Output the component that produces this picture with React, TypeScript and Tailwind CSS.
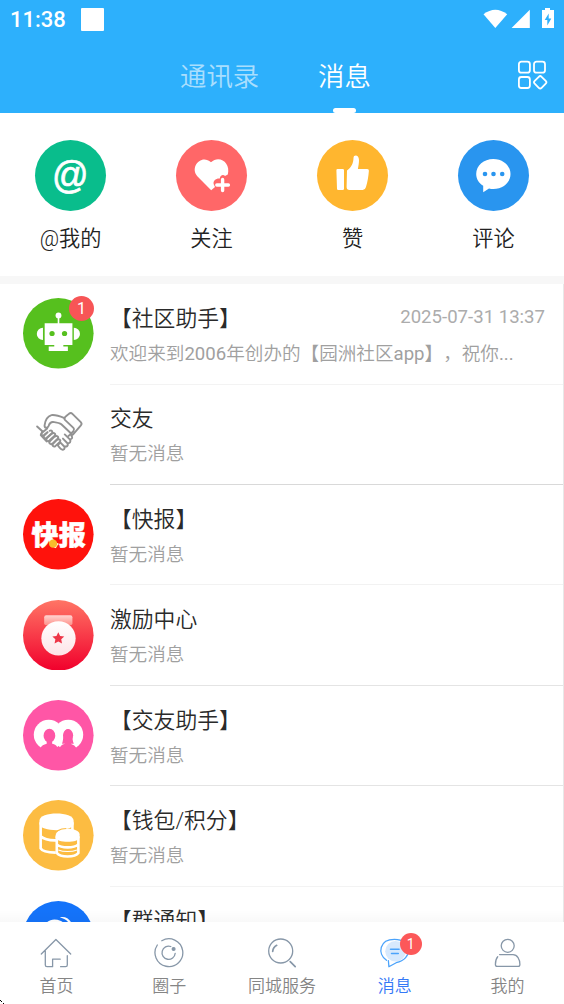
import React from 'react';

const Robot = () => (
  <svg viewBox="0 0 70 70" className="size-full">
    <circle cx="35" cy="35" r="35" fill="#56c01e" />
    <g fill="#fff">
      <circle cx="35.2" cy="17.3" r="2.9" />
      <path d="M34.4 19h1.6v6h-1.6zM21.5 25H49v21.7h-9V48h4.5v4.6h-19V48H31v-1.3h-9.5z" />
      <path d="M19.8 29.5v12.2a6.1 6.1 0 0 1 0-12.2zM50.4 29.5v12.2a6.1 6.1 0 0 0 0-12.2z" />
    </g>
    <circle cx="28.8" cy="35.2" r="2.6" fill="#56c01e" />
    <circle cx="41.2" cy="35.2" r="2.6" fill="#56c01e" />
  </svg>
);

const Handshake = () => (
  <svg viewBox="0 0 70 70" className="size-full" fill="none" stroke="#929292" strokeWidth="1.9" strokeLinecap="round" strokeLinejoin="round">
    <path d="M42.6 17.2l3.2-2.7q1.7-1.3 3.2.2l8.3 8.3q1.5 1.6.1 3.1l-7.7 9q-1.2 1.2-2.5-.2l2.9-3.4q1.2-1.5-.1-2.9l-8.4-7.9q-1.5-1.6 1-3.5z" />
    <path d="M41.2 19c-3.3-1.4-7.8-3.5-13-3-4 1.2-6.2 5-6.8 10.2-.1 2.8 2.7 3.2 3.9.7 1-2.3 1.2-4.4 4.5-4.1 3.3.4 6 .5 8.2 2.3l10 9.4-3 2.3" />
    <path d="M14 27.2l6 5.5M24 29.3l-4.8 3.8c-2.1 1.8-.4 4 1.6 2.6l3.4-2.8M24.4 33l-3.2 3c-1.8 2.1.4 4.1 2.3 2.4l5-4.2c1.7-1.8-.2-3.6-2-2.7" />
    <path d="M28.3 34.4l-4.5 4.3c-1.8 2.1.5 4 2.4 2.5l5.2-4.7c1.5-1.9-.7-3.6-2.4-2.3M31.3 37.2l-4.5 4.5c-1.7 2.1.5 4 2.4 2.5l5.1-4.8c1.6-1.9-.6-3.6-2.4-2.3M34.2 40l-4.2 4.1c-1.7 2.1.4 3.9 2.3 2.4l4.2-3.8c1.5-1.9-.5-3.5-2.2-2.3" />
    <path d="M36.5 43.5l-2.1 2.4c1.5 2.1 3.6 4.9 5.2 4.4 2.5-.5 1.7-2.6.8-3.7 3.1 1.6 5-.7 3.4-3 2.8.8 4.1-1.7 2.6-3.5 2.7-.5 3-2.2 1.5-3.8M40.4 46.6l-3.2-3.3M43.8 43.6l-4.2-4.3M46.4 40.1l-5-5M19 32.5l-1.4 3.4 5.8 6.2" />
  </svg>
);

const Express = () => (
  <svg viewBox="0 0 70 70" className="size-full">
    <circle cx="35" cy="35" r="35" fill="#ff120c" />
    <text x="35.4" y="46" textAnchor="middle" fill="#fff" stroke="#fff" strokeWidth="0.5" className="font-['Noto_Sans_CJK_SC',sans-serif] text-[27px] font-black">快报</text>
    <circle cx="29.8" cy="44.3" r="4.1" fill="#f8bc2b" />
  </svg>
);

const Medal = () => (
  <svg viewBox="0 0 70 70" className="size-full">
    <defs>
      <linearGradient id="medalBg" x2="0" y2="1">
        <stop stopColor="#ff7565" />
        <stop offset="1" stopColor="#f1002c" />
      </linearGradient>
      <linearGradient id="medalRibbon" x2="0" y2="1">
        <stop stopColor="#ffd5d2" />
        <stop offset="1" stopColor="#ff9089" />
      </linearGradient>
      <linearGradient id="medalDisc" x2="0" y2="1">
        <stop stopColor="#fff" />
        <stop offset="1" stopColor="#fde4e7" />
      </linearGradient>
    </defs>
    <circle cx="35" cy="35" r="35" fill="url(#medalBg)" />
    <path d="M23 15h24q2 0 2 2v6q0 2-2 2H23q-2 0-2-2v-6q0-2 2-2z" fill="url(#medalRibbon)" />
    <circle cx="35.2" cy="38" r="17" fill="url(#medalDisc)" />
    <path d="M35 32l1.8 3.7 4.1.5-3 2.8.8 4.1-3.7-2-3.7 2 .8-4.1-3-2.8 4.1-.5z" fill="#ee3547" />
  </svg>
);

const Friends = () => (
  <svg viewBox="0 0 70 70" className="size-full">
    <circle cx="35" cy="35" r="35" fill="#ff56a6" />
    <g fill="#fff">
      <circle cx="25.5" cy="34.5" r="14.8" />
      <circle cx="44.9" cy="34.5" r="14.8" />
    </g>
    <g fill="#ff56a6">
      <path d="M9 52V47.8h8.2q1.8-3.3 6.3-4.3V40h5.4v3.5q4.1.7 5.1 3.4l1.3.8 1.3-.8q1.2-2.7 5.4-3.6h-3.3c2.1-4.3.4-14.3 5.8-14.3s3.7 10 5.9 14.3h-3.2q4.3 1.2 6 4.5H61V52z" />
      <ellipse cx="26.2" cy="35.4" rx="5.8" ry="6.8" />
      <ellipse cx="44.7" cy="35" rx="5" ry="6.2" />
    </g>
  </svg>
);

const Wallet = () => (
  <svg viewBox="0 0 70 70" className="size-full">
    <circle cx="35" cy="35" r="35" fill="#fcbc42" />
    <g fill="none" stroke="#fff" strokeWidth="2.6">
      <path d="M17.5 22v26c1.5 3 8 4 15 4.2M49 22v8M17.5 36c4 3.7 9 4.2 15.7 4" />
      <path d="M33.5 36v16.5c3.5 4.7 18 4.7 21.4 0V36M33.5 44c4.5 4 17 4 21.4 0" />
      <path d="M35 49.5c5 2.2 13.5 2.2 18.5 0" strokeWidth="1" />
    </g>
    <path d="M16.3 20.5c0-9.5 33.9-9.5 33.9 0v3c0 8.5-33.9 8.5-33.9 0z" fill="#fff" />
    <path d="M32.3 34c0-7.4 23.8-7.4 23.8 0v3c0 6-23.8 6-23.8 0z" fill="#fff" />
    <path d="M32 34.5c0-3.3 4-6 11-6.2" fill="none" stroke="#fcbc42" strokeWidth="1" />
  </svg>
);

const Group = () => (
  <svg viewBox="0 0 70 70" className="size-full">
    <circle cx="35" cy="35" r="35" fill="#1473fa" />
    <path d="M23 22c3-4 9-4.8 14-2.4 4 2 7 4 9 8l-8 12-14-4zM36.5 16.2c5-1.3 9.8 1.2 11.8 6.2l-3-.6c-1.3-2.5-4.4-4.3-8.8-5.6z" fill="#fff" />
  </svg>
);

const welcome = (
  <>
    欢迎来到<span className="font-normal">2006</span>年创办的【园洲社区<span className="font-normal">app</span>】，祝你<span className="font-normal">...</span>
  </>
);

const conversations = [
  { title: '【社区助手】', text: welcome, time: '2025-07-31 13:37', icon: <Robot />, badge: 1, line: 'border-[#f3f3f3]' },
  { title: '交友', text: '暂无消息', icon: <Handshake />, line: 'border-[#d9d9d9]' },
  { title: '【快报】', text: '暂无消息', icon: <Express />, line: 'border-[#f2f2f2]' },
  { title: '激励中心', text: '暂无消息', icon: <Medal />, line: 'border-[#e4e4e4]' },
  { title: '【交友助手】', text: '暂无消息', icon: <Friends />, line: 'border-[#e4e4e4]' },
  { title: '【钱包/积分】', text: '暂无消息', icon: <Wallet />, line: 'border-[#f3f3f3]' },
  { title: '【群通知】', icon: <Group />, line: 'border-[#f3f3f3]' },
];

const shortcuts = [
  {
    label: '@我的',
    bg: 'bg-[#09bd8c]',
    icon: <text x="35.3" y="44.7" transform="scale(1 1.07)" textAnchor="middle" fill="#fff" stroke="#fff" strokeWidth="0.7" className="font-['Liberation_Sans',sans-serif] text-[36px] font-normal">@</text>,
  },
  {
    label: '关注',
    bg: 'bg-[#ff6768]',
    icon: (
      <>
        <path d="M35.2 50.3L21.3 36.2C13.5 27.5 25 13.7 35 22.2 43.5 14.5 55 23 51.8 34.5L49 36c-1.3-2-5-1.3-5.2 2.5-4.2-.3-6.9 2.5-6.1 5.7l1.3 2.8z" fill="#fff" />
        <path d="M46.6 39.5v11M40.8 45h11.6" stroke="#fff" strokeWidth="3.4" strokeLinecap="round" />
      </>
    ),
  },
  {
    label: '赞',
    bg: 'bg-[#ffb62f]',
    icon: (
      <path d="M20.5 29h5.3q1.2 0 1.2 1.2v18.6q0 1.2-1.2 1.2h-4.5q-1.3 0-1.3-1.2l-.6-18.6q0-1.2 1.1-1.2zM30 30.5c4.5-3.5 6.3-7 6.5-12.6.2-3.4 5.4-3.3 5.5 2.2 0 3.3-.5 5.7-1.1 8.9h9.3q1.9 0 1.7 1.8c-.5 6-1.5 11.7-3 16.5q-.8 2.7-3.2 2.7H32.5q-2.9 0-2.9-2.9z" fill="#fff" />
    ),
  },
  {
    label: '评论',
    bg: 'bg-[#2995ef]',
    icon: (
      <>
        <path d="M35.3 19c9.5 0 17.2 6.5 17.2 15S44.8 49 35.3 49q-2.3 0-4.3-.5L25.2 52.2v-6.5c-4.3-2.6-7-6.8-7-11.7 0-8.5 7.6-15 17.1-15z" fill="#fff" />
        <g fill="#2995ef">
          <circle cx="27" cy="34" r="2.3" />
          <circle cx="35.5" cy="34" r="2.3" />
          <circle cx="44.2" cy="34" r="2.3" />
        </g>
      </>
    ),
  },
];

const navItems = [
  { label: '首页', icon: <path d="M1.3 17L15.9 2.5 30.7 17M5.3 14v14q0 1.7 1.7 1.7h5.6v-7.5h7.6M27.3 18.7V28q0 1.7-1.7 1.7h-5" /> },
  {
    label: '圈子',
    icon: (
      <>
        <path d="M8.8 3.7A13.9 13.9 0 1 1 4.3 8" />
        <path d="M17.8 9.5a6.6 6.6 0 1 0 4.4 6.8" />
        <circle cx="20.6" cy="12" r="1.4" fill="#8797a8" />
      </>
    ),
  },
  {
    label: '同城服务',
    icon: (
      <>
        <circle cx="14.7" cy="14" r="12" />
        <path d="M6.7 14.3q.4-4 4-6M24.2 24.7l5 5" strokeWidth="1.7" />
      </>
    ),
  },
  {
    label: '消息',
    active: true,
    badge: 1,
    icon: (
      <>
        <circle cx="16.5" cy="14.3" r="10.3" fill="#d7e9fd" stroke="none" />
        <path d="M7.5 23.3C-2 16.5.5 2.3 15.4 2.3c18 0 18.8 20.2 1.8 23.4l-7.3 4-.5-6" />
        <path d="M11.5 12.2h8.6M12.5 16.5h6.8" strokeWidth="1.5" />
      </>
    ),
  },
  {
    label: '我的',
    icon: (
      <>
        <circle cx="15.7" cy="8.8" r="6.5" />
        <path d="M7.6 17.6H21c4.3 0 6.9 4.5 6.9 9.9q0 1.9-1.9 1.9H5.3q-1.9 0-1.9-1.9c0-3.2.7-5.9 2.3-7.7" />
      </>
    ),
  },
];

const StatusBar = () => (
  <div className="flex h-[38px] items-center justify-between px-[10px]">
    <div className="flex items-center gap-[15px]">
      <span className="w-[56px] whitespace-nowrap pt-[2px] font-[Roboto,sans-serif] text-[22px] font-medium leading-none">11:38</span>
      <span className="size-[23px] rounded-[1px] bg-white" />
    </div>
    <svg viewBox="0 0 72 22" className="h-[22px] w-[72px]" fill="#fff">
      <path d="M1.5 6.3q11.8-9 23.7 0L13.3 20z" />
      <path d="M29.6 20L47.8 1.7V20z" />
      <path d="M63 0h5v2h4v18H60V2h3zM66.7 5.5l-4 6.5h2.6v5.5l4-7h-2.6z" fillRule="evenodd" />
    </svg>
  </div>
);

const Header = () => (
  <header className="flex h-[113px] shrink-0 flex-col bg-[#2db0fc] text-white">
    <StatusBar />
    <div className="flex flex-1 items-start">
      <span className="ml-[180px] w-[138px] pt-[19px] text-[26.4px] leading-[40px] text-white/60">通讯录</span>
      <div className="flex h-full w-[53px] flex-col items-center justify-between pt-[19px]">
        <span className="text-[26.4px] leading-[40px]">消息</span>
        <span className="h-[5px] w-[23px] rounded-[3px] bg-white" />
      </div>
      <svg viewBox="0 0 32 32" className="ml-auto mr-[16px] mt-[21px] size-[32px]" fill="none" stroke="#fff" strokeWidth="1.8">
        <rect x="2.9" y="2.7" width="11" height="11" rx="2.5" />
        <rect x="18" y="2.7" width="11" height="11" rx="2.5" />
        <rect x="2.9" y="18" width="11" height="11" rx="2.5" />
        <rect x="-4.9" y="-4.9" width="9.8" height="9.8" rx="2" transform="translate(24.2 23.3) rotate(45)" />
      </svg>
    </div>
  </header>
);

export default function App() {
  return (
    <div className="flex h-[1004px] w-[564px] flex-col overflow-hidden bg-white font-[Roboto,'Noto_Sans_CJK_SC',sans-serif] font-[350] [text-spacing-trim:space-all]">
      <Header />

      <section className="grid h-[163px] shrink-0 grid-cols-4 pt-[27px]">
        {shortcuts.map((item) => (
          <div key={item.label} className="flex flex-col items-center text-[#222]">
            <div className={`size-[71px] rounded-full ${item.bg}`}>
              <svg viewBox="0 0 71 71" className="size-full">{item.icon}</svg>
            </div>
            <span className="mt-3 text-[21.2px] leading-[32px]">{item.label}</span>
          </div>
        ))}
      </section>
      <div className="h-2 shrink-0 bg-[#f7f7f7]" />

      <main className="relative min-h-0 flex-1 overflow-hidden border-r border-[#e8e8e8] pt-[0.2px]">
        {conversations.map((item) => (
          <div key={item.title} className="flex h-[100.4px]">
            <div className="relative ml-[23.4px] mt-[14.2px] size-[70.6px] shrink-0">
              {item.icon}
              {item.badge && (
                <span className="absolute -top-[2px] right-0 flex size-[25px] items-center justify-center rounded-full bg-[#f75556] pt-px text-[16px] font-normal text-white">{item.badge}</span>
              )}
            </div>
            <div className={`ml-4 flex-1 border-b pt-[18.9px] ${item.line}`}>
              <div className="flex justify-between pr-[18px]">
                <h2 className="whitespace-nowrap text-[21.8px] leading-[32px] text-[#2a2a2a]">{item.title}</h2>
                {item.time && <time className="text-[18.6px] font-normal leading-[29px] text-[#acacac]">{item.time}</time>}
              </div>
              {item.text && <p className="mt-[5px] whitespace-nowrap text-[18.6px] leading-[28px] text-[#a0a0a0]">{item.text}</p>}
            </div>
          </div>
        ))}
        <div className="absolute inset-x-0 bottom-0 h-3 bg-gradient-to-b from-black/0 to-black/[0.025]" />
      </main>

      <nav className="relative grid h-[82px] shrink-0 grid-cols-5 bg-white">
        {navItems.map((item) => (
          <div key={item.label} className={`flex flex-col items-center pt-[15px] ${item.active ? 'text-[#3478f6]' : 'text-[#858585]'}`}>
            <div className="relative size-[32px]">
              <svg viewBox="0 0 32 32" className="size-full" fill="none" stroke={item.active ? '#4ba3fb' : '#8797a8'} strokeWidth="1.3" strokeLinecap="round" strokeLinejoin="round">
                {item.icon}
              </svg>
              {item.badge && (
                <span className="absolute -right-[11px] -top-[4px] flex size-[22px] items-center justify-center rounded-full bg-[#fc5859] pt-px text-[14px] font-normal text-white">{item.badge}</span>
              )}
            </div>
            <span className="mt-[4px] text-[17px] leading-[26px]">{item.label}</span>
          </div>
        ))}
        {/* rounded corner of the device frame */}
        <svg viewBox="0 0 4 4" className="absolute bottom-0 left-0 size-1" fill="#000">
          <path d="M0 0h1v1H0zM1 1h1v1H1zM3 3h1v1H3z" />
        </svg>
      </nav>
    </div>
  );
}
